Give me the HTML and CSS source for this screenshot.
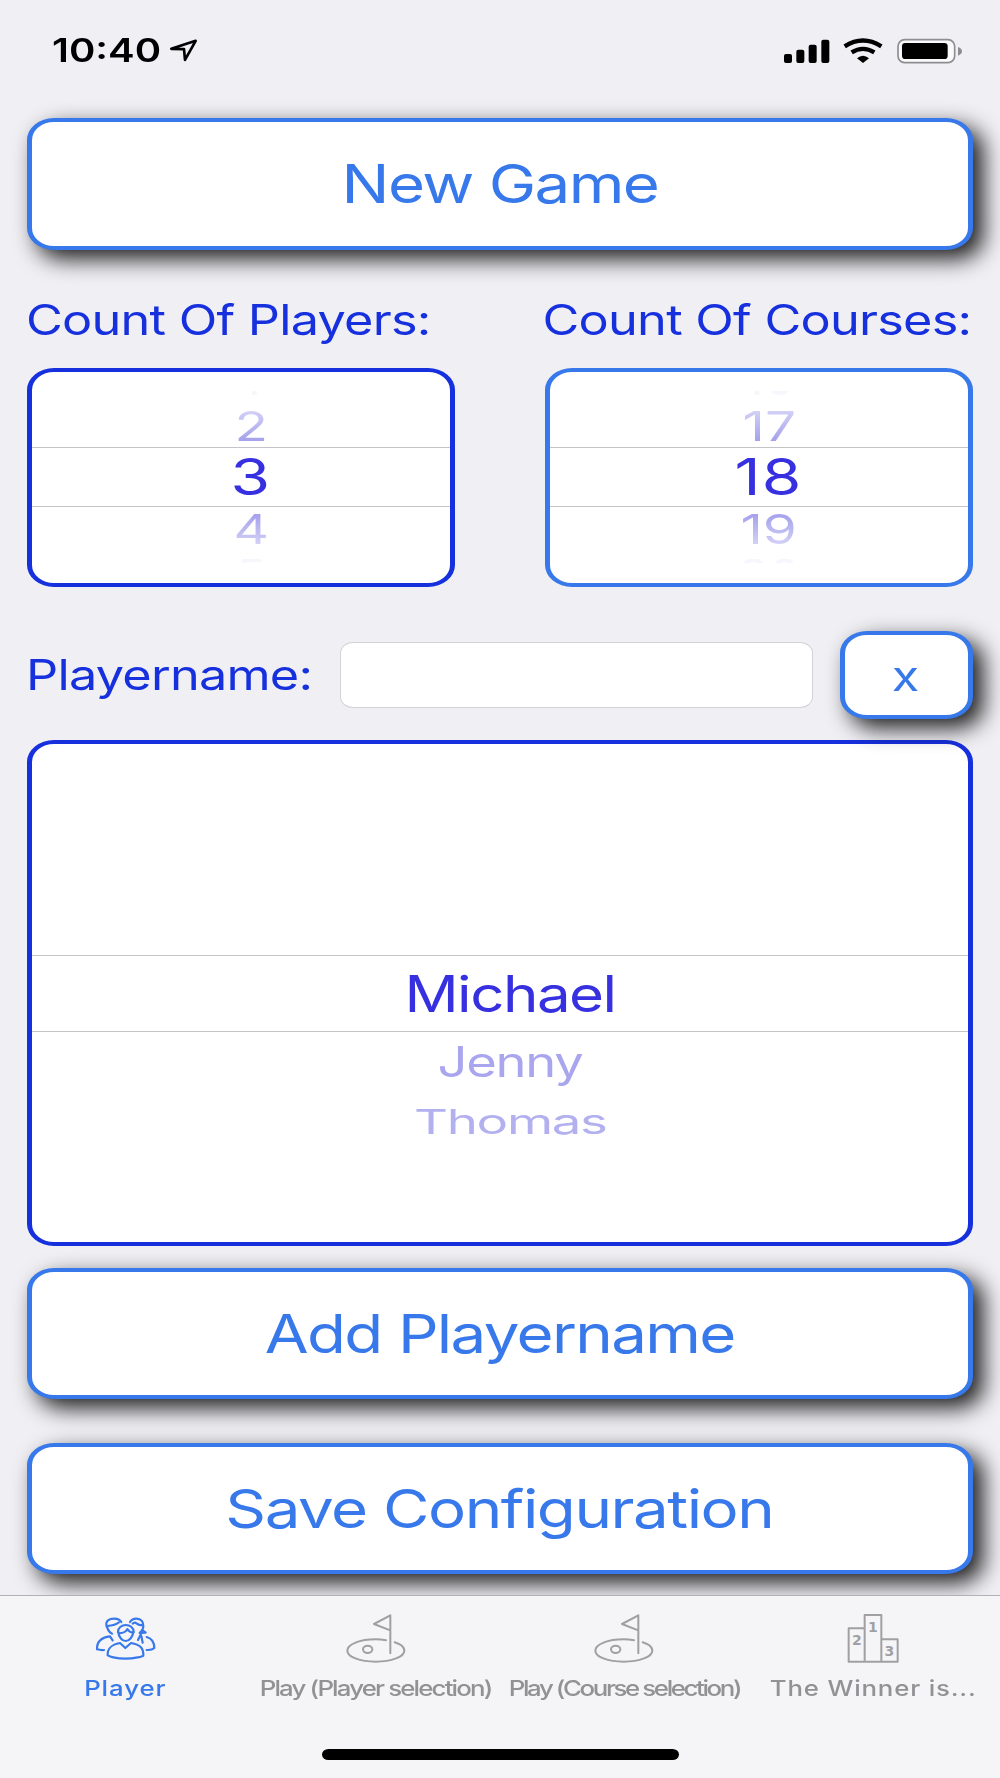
FILE: index.html
```html
<!DOCTYPE html>
<html lang="en">
<head>
    <meta charset="UTF-8">
    <meta name="viewport" content="width=device-width, initial-scale=1.0">
    <title>Minigolf - Player</title>
    <link rel="stylesheet" href="styles.css">
</head>
<body>
    <div class="status-bar">
        <div class="status-left">
            <span class="wide time">10:40</span>
            <svg class="location" viewBox="507 115 90 74">
                <path d="M587 123 L555 180 L552 148 L514 147 Z"/>
            </svg>
        </div>
        <svg class="status-icons" viewBox="846 106 546 90">
            <!-- signal -->
            <rect x="852" y="160" width="24" height="27" rx="6"/>
            <rect x="889" y="147" width="24" height="40" rx="6"/>
            <rect x="926" y="132" width="24" height="55" rx="6"/>
            <rect x="964" y="117" width="24" height="70" rx="6"/>
            <!-- wifi -->
            <g class="wifi">
                <path d="M1034 137 Q1089 102 1144 137"/>
                <path d="M1055 155 Q1089 134 1123 155"/>
            </g>
            <path d="M1071 173 Q1089 157 1107 173 L1089 187 Z"/>
            <!-- battery -->
            <rect class="battery" x="1194" y="117" width="170" height="69" rx="20"/>
            <rect x="1206" y="127" width="137" height="48" rx="10"/>
            <path class="nub" d="M1374 139 Q1386 143 1386 152 Q1386 161 1374 165 Z"/>
        </svg>
    </div>

    <main class="content">
        <button class="btn btn-new"><span class="wide">New Game</span></button>

        <div class="counts">
            <div class="count">
                <label class="label"><span class="wide left">Count Of Players:</span></label>
                <div class="picker picker-small picker-dark">
                    <div class="ghost ghost-top"><span>1</span></div>
                    <div class="row"><span class="fade-up">2</span></div>
                    <div class="row selected"><span class="wide">3</span></div>
                    <div class="row"><span class="fade-down">4</span></div>
                    <div class="ghost ghost-bottom"><span>5</span></div>
                </div>
            </div>
            <div class="count">
                <label class="label label-right"><span class="wide right">Count Of Courses:</span></label>
                <div class="picker picker-small">
                    <div class="ghost ghost-top"><span>16</span></div>
                    <div class="row"><span class="fade-up">17</span></div>
                    <div class="row selected"><span class="wide">18</span></div>
                    <div class="row"><span class="fade-down">19</span></div>
                    <div class="ghost ghost-bottom"><span>20</span></div>
                </div>
            </div>
        </div>

        <div class="name-row">
            <label class="label" for="playername"><span class="wide left">Playername:</span></label>
            <input type="text" id="playername">
            <button class="btn btn-clear"><span class="wide">x</span></button>
        </div>

        <div class="picker picker-dark picker-names">
            <div class="row selected"><span class="wide">Michael</span></div>
            <div class="row second"><span>Jenny</span></div>
            <div class="row third"><span>Thomas</span></div>
        </div>

        <button class="btn btn-add"><span class="wide">Add Playername</span></button>
        <button class="btn btn-save"><span class="wide">Save Configuration</span></button>
    </main>

    <nav class="tab-bar">
        <div class="tabs">
            <a class="tab active">
                <svg class="icon-players" viewBox="285 78 186 138">
                    <path d="M354 126 C354 98 401 98 401 126"/>
                    <path d="M355 127 C356 141 367 153 377 153 C387 153 398 141 400 127"/>
                    <path d="M357 130 Q378 128 382 117 Q388 127 399 128"/>
                    <path d="M360 159 L376 174 L393 159 C420 164 431 173 430 197 Q420 202 413 202 Q376 210 340 202 Q330 200 323 196 C322 174 334 164 360 159 Z"/>
                    <path d="M320 110 C315 92 328 86 343 86 Q358 86 364 96"/>
                    <path d="M321 108 Q347 107 357 97"/>
                    <path d="M321 108 Q323 124 336 131"/>
                    <path d="M338 151 L330 139 C306 142 290 152 291 178 Q301 181 312 180"/>
                    <path d="M390 96 Q396 86 409 86 C424 86 431 95 430 111 L427 120"/>
                    <path d="M398 101 Q405 95 409 100 Q416 106 429 106"/>
                    <path d="M419 129 L427 120 L437 128 Z"/>
                    <path d="M424 130 L414 150 M424 138 L428 158"/>
                    <path d="M440 141 C458 146 463 158 463 174 Q456 181 440 180"/>
                </svg>
                <span class="wide">Player</span>
            </a>
            <a class="tab tab-players">
                <svg class="icon-flag" viewBox="1036 64 186 156">
                    <path d="M1172 188 V74 L1123 100 L1172 119"/>
                    <path d="M1159 149 Q1144 146 1128 146 C1080 146 1043 161 1043 180 C1043 198 1080 213 1128 213 C1176 213 1214 198 1214 180 Q1213 163 1185 155"/>
                    <ellipse cx="1104" cy="176" rx="14" ry="11"/>
                </svg>
                <span class="wide">Play (Player selection)</span>
            </a>
            <a class="tab tab-courses">
                <svg class="icon-flag" viewBox="1036 64 186 156">
                    <path d="M1172 188 V74 L1123 100 L1172 119"/>
                    <path d="M1159 149 Q1144 146 1128 146 C1080 146 1043 161 1043 180 C1043 198 1080 213 1128 213 C1176 213 1214 198 1214 180 Q1213 163 1185 155"/>
                    <ellipse cx="1104" cy="176" rx="14" ry="11"/>
                </svg>
                <span class="wide">Play (Course selection)</span>
            </a>
            <a class="tab tab-winner">
                <svg class="icon-podium" viewBox="1036 64 162 156">
                    <path d="M1092 113 H1044 V213 H1191 V146 H1142 M1092 213 V73 H1142 V213"/>
                    <text x="1117" y="123">1</text>
                    <text x="1069" y="162">2</text>
                    <text x="1166" y="195">3</text>
                </svg>
                <span class="wide">The Winner is...</span>
            </a>
        </div>
        <div class="home-indicator"></div>
    </nav>
</body>
</html>
```
FILE: styles.css
```css
* {
    box-sizing: border-box;
}
body {
    margin: 0;
    width: 1000px;
    height: 1778px;
    overflow: hidden;
    display: flex;
    flex-direction: column;
    background: #efeff4;
    font-family: Inter, 'Liberation Sans', sans-serif;
}
/* stretched type */
.wide {
    display: inline-block;
    white-space: nowrap;
    transform: scaleX(1.2);
}
.wide.left {
    transform-origin: left;
}
.wide.right {
    transform-origin: right;
}

/* status bar */
.status-bar {
    height: 101px;
    padding: 0 36px 0 52px;
    display: flex;
    justify-content: space-between;
    align-items: center;
}
.status-left {
    display: flex;
    align-items: center;
}
.time {
    width: 117px;
    font-size: 32px;
    font-weight: 600;
    transform: scaleX(1.25);
    transform-origin: left;
}
.location {
    width: 30px;
    height: 25px;
    fill: none;
    stroke: #000;
    stroke-width: 8;
    stroke-linejoin: round;
}
.status-icons {
    width: 182px;
    height: 30px;
}
.wifi {
    fill: none;
    stroke: #000;
    stroke-width: 13;
}
.battery {
    fill: #fafafc;
    stroke: #8e8e91;
    stroke-width: 5;
}
.nub {
    fill: #8e8e91;
}

.content {
    height: 1494px;
    padding: 17px 27px 0;
    display: flex;
    flex-direction: column;
}

/* buttons */
.btn {
    position: relative;
    z-index: 1;
    flex: none;
    height: 131px;
    padding: 0;
    background: white;
    color: #3778ea;
    border: solid #3778ea;
    border-width: 4px 5px;
    border-radius: 27px / 22px;
    box-shadow: 10px 9px 22px rgba(0,0,0,0.88);
    font-family: inherit;
    font-size: 53px;
    letter-spacing: -0.026em;
}
.btn-new {
    height: 132px;
}
.btn-add {
    margin-top: 22px;
}
.btn-save {
    margin-top: 44px;
    padding-right: 2px;
    letter-spacing: -0.023em;
}

/* labels */
.label {
    display: block;
    margin-left: -1px;
    font-size: 42px;
    line-height: 50px;
    letter-spacing: -0.015em;
    color: #1730de;
}
.label-right {
    margin: 0 2px 0 0;
    text-align: right;
}

/* pickers */
.counts {
    margin-top: 45px;
    display: flex;
    justify-content: space-between;
}
.count {
    width: 428px;
}
.picker {
    background: white;
    border: solid #3778ea;
    border-width: 4px 5px;
    border-radius: 27px / 22px;
    color: #3730e0;
    font-size: 50px;
    text-align: center;
}
.picker-dark {
    border-color: #1730de;
}
.picker-small {
    height: 219px;
    margin-top: 23px;
    padding-top: 19px;
}
.row {
    height: 43px;
    display: flex;
    justify-content: center;
    align-items: center;
    padding-left: 20px;
    line-height: 1;
}
.row.selected {
    height: 60px;
    border: solid #c4c4c8;
    border-width: 1px 0;
}
.picker-small .selected .wide {
    transform: scaleX(1.28);
    letter-spacing: 0.02em;
}
.fade-up,
.fade-down {
    transform: scale(1.1, 0.83);
    color: transparent;
    background: linear-gradient(#d2d0f6 15%, #a5a1ec 85%);
    -webkit-background-clip: text;
    background-clip: text;
}
.fade-down {
    background-image: linear-gradient(#a5a1ec 15%, #d2d0f6 85%);
}
.ghost {
    height: 4px;
    margin-bottom: 9px;
    padding-left: 20px;
    overflow: hidden;
    display: flex;
    justify-content: center;
    line-height: 36px;
    color: #f7f6fd;
}
.ghost-top {
    align-items: flex-end;
}
.ghost-bottom {
    margin: 9px 0 0;
}

/* player name */
.name-row {
    margin-top: 44px;
    display: flex;
    align-items: center;
}
.name-row .label {
    width: 314px;
}
.name-row input {
    width: 473px;
    height: 66px;
    padding: 0 16px;
    background: white;
    border: 1px solid #d3d3d7;
    border-radius: 13px / 11px;
    font-size: 42px;
}
.btn-clear {
    width: 133px;
    height: 88px;
    margin-left: 27px;
    padding-right: 3px;
    font-size: 42px;
}
.picker-names {
    height: 506px;
    margin-top: 21px;
    padding-top: 211px;
    flex: none;
    letter-spacing: -0.025em;
}
.picker-names .row.selected {
    height: 77px;
}
.picker-names .second {
    height: 60px;
    color: #a9a5ee;
}
.picker-names .second span {
    transform: scale(1.05, 0.84);
}
.picker-names .third {
    height: 59px;
    color: #b3b0f0;
}
.picker-names .third span {
    transform: scale(1.055, 0.68);
}

/* tab bar */
.tab-bar {
    position: relative;
    z-index: 2;
    height: 183px;
    padding-top: 16px;
    background: #f5f5f7;
    border-top: 1px solid #b2b2b6;
}
.tabs {
    height: 137px;
    display: grid;
    grid-template-columns: repeat(4, 249px);
}
.tab {
    display: flex;
    flex-direction: column;
    align-items: center;
    font-size: 21.5px;
    font-weight: 500;
    line-height: 26px;
    color: #929295;
}
.tab.active {
    padding-left: 2px;
    color: #3778ea;
    letter-spacing: 0.035em;
}
.tab-players {
    padding-left: 5px;
    letter-spacing: -0.071em;
}
.tab-courses {
    padding-left: 3px;
    letter-spacing: -0.092em;
}
.tab-winner {
    padding-left: 3px;
    letter-spacing: 0.032em;
}
.tab svg {
    height: 52px;
    margin-bottom: 11px;
    fill: none;
    stroke: #a0a0a2;
    stroke-width: 6;
    stroke-linejoin: round;
    stroke-linecap: round;
}
.tab .icon-players {
    width: 62px;
    height: 46px;
    margin: 4px 0 13px;
    stroke: #3778ea;
    stroke-width: 6.5;
}
.icon-flag {
    width: 62px;
}
.icon-podium {
    width: 54px;
}
.icon-podium text {
    fill: #a0a0a2;
    stroke: none;
    font-family: 'DejaVu Sans', sans-serif;
    font-size: 42px;
    font-weight: 700;
    letter-spacing: 0;
    text-anchor: middle;
}
.home-indicator {
    width: 357px;
    height: 11px;
    margin: 0 auto;
    background: black;
    border-radius: 7px / 6px;
}
```
